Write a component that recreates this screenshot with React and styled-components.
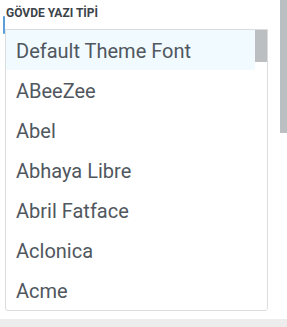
import React from 'react';
import styled, { createGlobalStyle } from 'styled-components';

const fonts = [
  'Default Theme Font', 'ABeeZee', 'Abel', 'Abhaya Libre', 'Abril Fatface', 'Aclonica', 'Acme',
];

const GlobalStyle = createGlobalStyle`
  html, body {
    margin: 0;
    padding: 0;
    background: #fff;
  }
  body {
    font-family: Roboto, "Liberation Sans", sans-serif;
  }
`;

const Page = styled.div`
  display: flex;
  height: 319px;
  background: #fff;
`;

const Panel = styled.div`
  position: relative;
  flex: 1;
  padding: 6px 12px 0 5px;
`;

const Scrollbar = styled.div`
  flex: none;
  width: ${p => p.$width}px;
  background: #fff;
`;

const Thumb = styled.div`
  height: ${p => p.$height}px;
  background: #bcbfc2;
`;

const FocusMark = styled.span`
  position: absolute;
  left: 3px;
  top: 16px;
  width: 2px;
  height: 18px;
  background: #5b9fdb;
  border-radius: 1px;
`;

const Label = styled.div`
  margin: 0 0 8px 1px;
  font-size: 12px;
  line-height: 15px;
  font-weight: 700;
  color: #3c434a;
  text-transform: uppercase;
`;

const ListBox = styled.div`
  display: flex;
  height: 280px;
  border: 1px solid #dcdcde;
  border-radius: 0 0 3px 3px;
  overflow: hidden;
`;

const Options = styled.ul`
  flex: 1;
  margin: 0;
  padding: 0;
  list-style: none;
`;

const Option = styled.li`
  height: 40px;
  padding: 2px 0 0 10px;
  box-sizing: border-box;
  display: flex;
  align-items: center;
  font-size: 20px;
  color: #50575e;
  white-space: nowrap;
  background: ${p => (p.$selected ? '#f0faff' : 'transparent')};
`;

const Footer = styled.div`
  height: 8px;
  background: #ededed;
`;

export default function App() {
  return (
    <>
      <GlobalStyle />
      <Page>
        <Panel>
          <FocusMark />
          <Label>Gövde Yazı Tİpİ</Label>
          <ListBox>
            <Options>
              {fonts.map((f, i) => (
                <Option key={f} $selected={i === 0}>{f}</Option>
              ))}
            </Options>
            <Scrollbar $width={12}>
              <Thumb $height={32} />
            </Scrollbar>
          </ListBox>
        </Panel>
        <Scrollbar $width={7}>
          <Thumb $height={133} />
        </Scrollbar>
      </Page>
      <Footer />
    </>
  );
}
